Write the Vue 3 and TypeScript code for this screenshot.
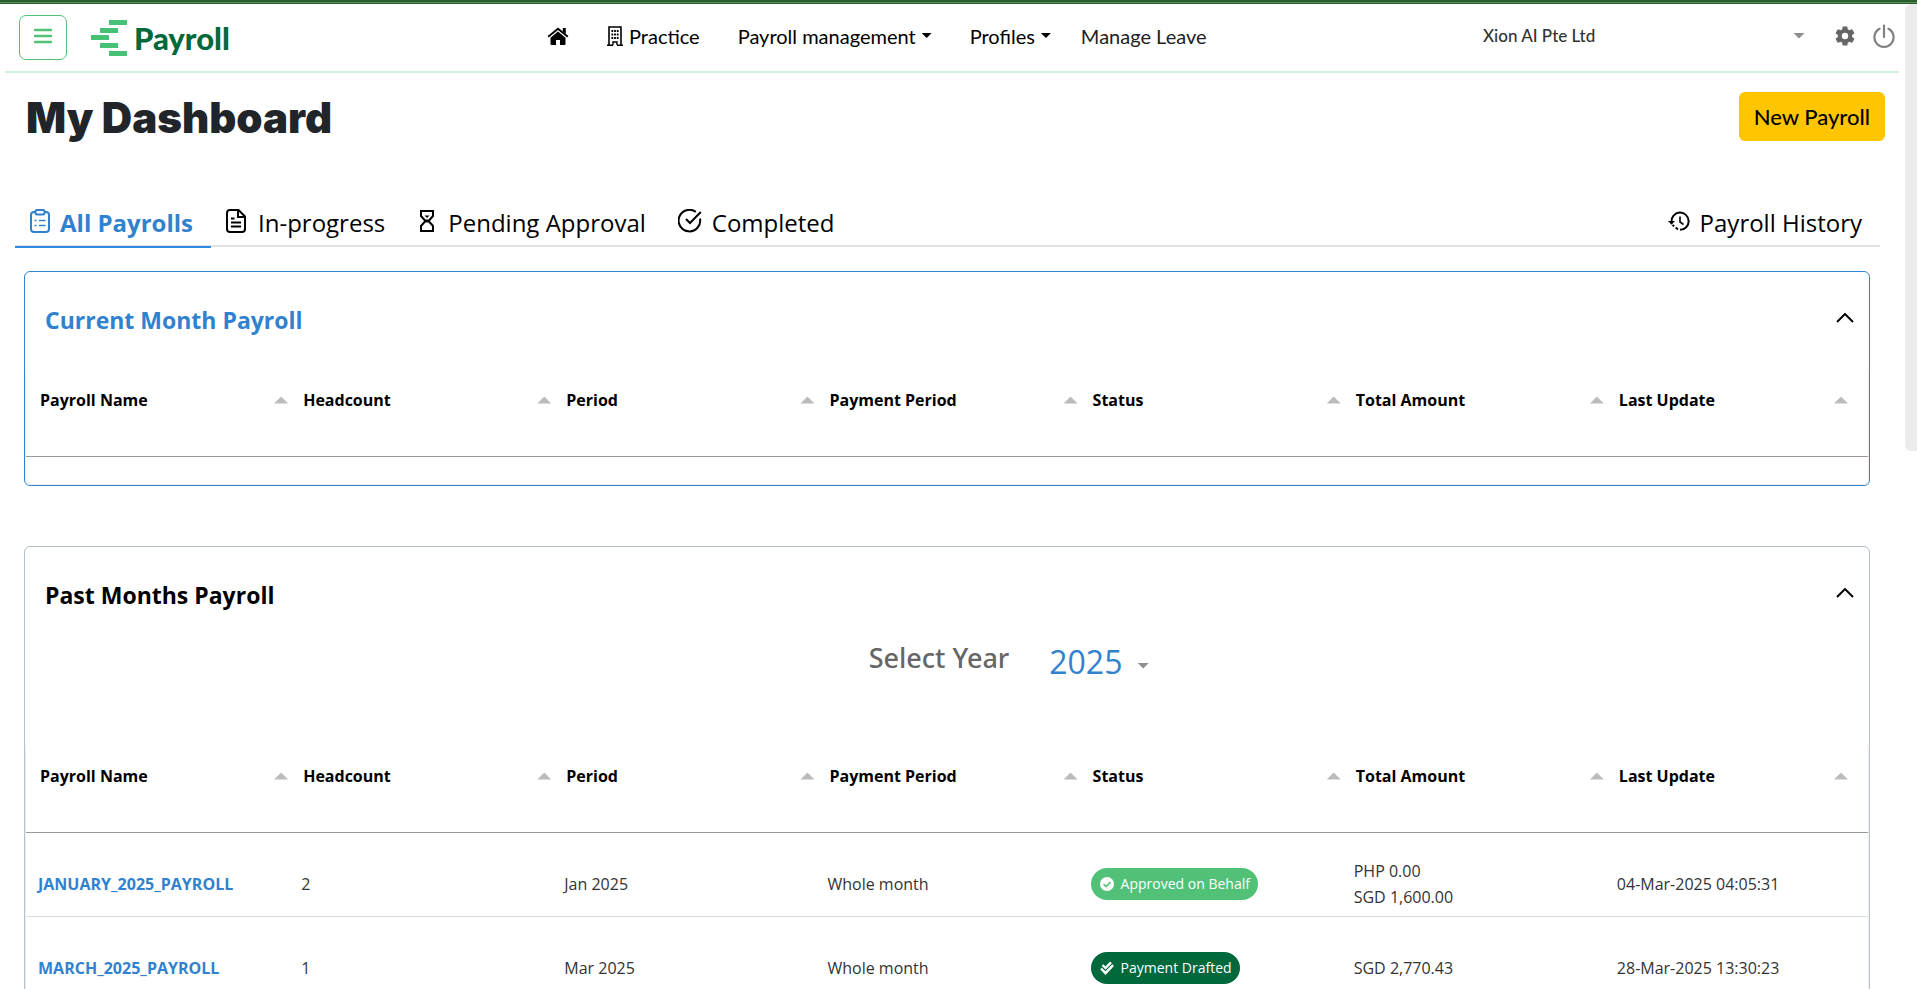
<script setup lang="ts">
import { ref } from 'vue'

interface PayrollRow {
  name: string
  headcount: number
  period: string
  paymentPeriod: string
  status: string
  kind: 'approved' | 'drafted'
  amounts: string[]
  updated: string
}

const columns: string[] = [
  'Payroll Name',
  'Headcount',
  'Period',
  'Payment Period',
  'Status',
  'Total Amount',
  'Last Update',
]

const rows: PayrollRow[] = [
  {
    name: 'JANUARY_2025_PAYROLL',
    headcount: 2,
    period: 'Jan 2025',
    paymentPeriod: 'Whole month',
    status: 'Approved on Behalf',
    kind: 'approved',
    amounts: ['PHP 0.00', 'SGD 1,600.00'],
    updated: '04-Mar-2025 04:05:31',
  },
  {
    name: 'MARCH_2025_PAYROLL',
    headcount: 1,
    period: 'Mar 2025',
    paymentPeriod: 'Whole month',
    status: 'Payment Drafted',
    kind: 'drafted',
    amounts: ['SGD 2,770.43'],
    updated: '28-Mar-2025 13:30:23',
  },
]

const company = ref('Xion AI Pte Ltd')
const year = ref('2025')
const currentOpen = ref(true)
const pastOpen = ref(true)
</script>

<template>
  <div class="page">
    <div class="window-edge"></div>
    <header class="topbar">
      <div class="brand">
        <button class="menu-btn" type="button" aria-label="Menu">
          <svg width="18" height="16" viewBox="0 0 18 16" fill="none" stroke="#51c178" stroke-width="2.400" stroke-linecap="round">
            <path d="M1 2h16M1 8h16M1 14h16" />
          </svg>
        </button>
        <a class="logo" href="#">
          <svg width="36" height="36" viewBox="0 0 36 36" fill="#45c276">
            <path d="M18 0h18v5H18zM9 8h18v5H9zM0 15h18v5H0zM9 23h18v5H9zM18 31h18v5H18z" />
          </svg>
          <span>Payroll</span>
        </a>
      </div>
      <nav class="nav">
        <a class="nav-item home" href="#" aria-label="Home">
          <svg width="22" height="18" viewBox="0 0 22 18" fill="#000">
            <path d="M11 4.500 3.500 10.700V17a1 1 0 0 0 1 1H9v-5h4v5h4.500a1 1 0 0 0 1-1v-6.300z" />
            <path d="M1.200 9.800 11 1.700l9.800 8.100" fill="none" stroke="#000" stroke-width="1.900" />
            <path d="M15.800 1h3v6l-3-2.500z" />
          </svg>
        </a>
        <a class="nav-item practice" href="#">
          <svg width="16" height="20" viewBox="0 0 16 20" fill="none" stroke="#000">
            <path d="M2 19V1h12v18" stroke-width="1.600" />
            <path d="M0 19.200h6M10 19.200h6M6 19v-3h4v3" stroke-width="1.400" />
            <path d="M4.400 5h1.800M7.100 5h1.800M9.800 5h1.800M4.400 8.500h1.800M7.100 8.500h1.800M9.800 8.500h1.800M4.400 12h1.800M7.100 12h1.800M9.800 12h1.800" stroke-width="1.800" />
          </svg>
          <span>Practice</span>
        </a>
        <button class="nav-item" type="button">Payroll management<i class="caret dark"></i></button>
        <button class="nav-item" type="button">Profiles<i class="caret dark"></i></button>
        <a class="nav-item leave" href="#">Manage Leave</a>
      </nav>
      <div class="account">
        <label class="company">
          <select v-model="company" aria-label="Company">
            <option>Xion AI Pte Ltd</option>
          </select>
          <i class="caret"></i>
        </label>
        <button class="icon-btn" type="button" aria-label="Settings">
          <svg width="22" height="22" viewBox="1 1 22 22" fill="#666">
            <path d="M19.140 12.940c.04-.3.06-.61.06-.94 0-.32-.02-.64-.07-.94l2.030-1.580a.49.49 0 0 0 .12-.61l-1.920-3.320a.49.49 0 0 0-.59-.22l-2.390.96c-.5-.38-1.030-.7-1.620-.94l-.36-2.540a.48.48 0 0 0-.48-.41h-3.840a.48.48 0 0 0-.47.41l-.36 2.540c-.59.24-1.130.57-1.620.94l-2.390-.96a.48.48 0 0 0-.59.22L2.740 8.870a.48.48 0 0 0 .12.61l2.030 1.580c-.05.3-.09.63-.09.94s.02.64.07.94l-2.030 1.580a.49.49 0 0 0-.12.61l1.920 3.320c.12.22.37.29.59.22l2.390-.96c.5.38 1.030.7 1.620.94l.36 2.540c.05.24.24.41.48.41h3.840c.24 0 .44-.17.47-.41l.36-2.540c.59-.24 1.130-.56 1.620-.94l2.390.96c.22.08.47 0 .59-.22l1.920-3.320a.48.48 0 0 0-.12-.61zM12 15.200A3.200 3.200 0 1 1 12 8.800a3.200 3.200 0 0 1 0 6.400z" />
          </svg>
        </button>
        <button class="icon-btn" type="button" aria-label="Log out">
          <svg width="22" height="24" viewBox="0 0 22 24" fill="none" stroke="#808080" stroke-width="2.200" stroke-linecap="round">
            <path d="M11 1.500v11.500M6.500 4.800a9.600 9.600 0 1 0 9 0" />
          </svg>
        </button>
      </div>
    </header>

    <main class="content">
      <div class="title-row">
        <h1>My Dashboard</h1>
        <button class="new-btn" type="button">New Payroll</button>
      </div>

      <div class="tabs" role="tablist">
        <button class="tab active" role="tab" type="button">
          <svg width="20" height="24" viewBox="0 0 20 24" fill="none" stroke="#3182ce" stroke-width="2">
            <rect x="1" y="3" width="18" height="20" rx="3" />
            <rect x="5.500" y="1" width="9" height="4.500" rx="1.500" fill="#fff" />
            <path d="M4.500 11.500h2M9 11.500h6.500M4.500 16.500h2M9 16.500h6.500" stroke-width="1.600" />
          </svg>
          <span>All Payrolls</span>
        </button>
        <button class="tab" role="tab" type="button">
          <svg width="20" height="24" viewBox="0 0 20 24" fill="none" stroke="#000" stroke-width="2">
            <path d="M4 1h8.500L19 7.500V20a3 3 0 0 1-3 3H4a3 3 0 0 1-3-3V4a3 3 0 0 1 3-3z" />
            <path d="M12 1v7h7" />
            <path d="M5 9.500h3.500M5 13.500h10M5 17.500h10" stroke-width="1.800" />
          </svg>
          <span>In-progress</span>
        </button>
        <button class="tab pending" role="tab" type="button">
          <svg width="14" height="22" viewBox="0 0 14 22" fill="none" stroke="#000" stroke-width="2">
            <path d="M1 1h12v5l-4.500 5 4.500 5v5H1v-5l4.500-5L1 6z" />
            <path d="M4.500 5.500h5L7 8z" fill="#000" stroke="none" />
            <path d="M5.500 9.500h3v3h-3z" fill="#000" stroke="none" />
          </svg>
          <span>Pending Approval</span>
        </button>
        <button class="tab completed" role="tab" type="button">
          <svg width="24" height="24" viewBox="0 0 24 24" fill="none" stroke="#000" stroke-width="2">
            <path d="M22 9.500A10.800 10.800 0 1 1 17.800 2.900" />
            <path d="M8 10l4 4L22.800 3" />
          </svg>
          <span>Completed</span>
        </button>
        <button class="tab history" role="tab" type="button">
          <svg width="22" height="20" viewBox="0 0 22 20" fill="none" stroke="#000" stroke-width="2">
            <path d="M3.500 11A8.600 8.600 0 1 1 12 18.800" />
            <path d="M10 18.500 4.500 14" stroke-dasharray="3 2" />
            <path d="M0 10h7l-3.500 3.800z" fill="#000" stroke="none" />
            <path d="M12 5.500V11l3.500 2.500" stroke-width="1.600" />
          </svg>
          <span>Payroll History</span>
        </button>
      </div>

      <section class="card current">
        <div class="card-head">
          <h2>Current Month Payroll</h2>
          <button class="toggle" type="button" aria-label="Toggle current month" @click="currentOpen = !currentOpen">
            <svg width="18" height="10" viewBox="0 0 18 10" fill="none" stroke="#000" stroke-width="2"><path d="M1 9l8-8 8 8" /></svg>
          </button>
        </div>
        <div v-if="currentOpen" class="table-box">
          <table>
            <thead>
              <tr>
                <th v-for="c in columns" :key="c" scope="col">
                  <span class="th"><span>{{ c }}</span><i class="sort"></i></span>
                </th>
              </tr>
            </thead>
          </table>
        </div>
      </section>

      <section class="card past">
        <div class="card-head">
          <h2>Past Months Payroll</h2>
          <button class="toggle" type="button" aria-label="Toggle past months" @click="pastOpen = !pastOpen">
            <svg width="18" height="10" viewBox="0 0 18 10" fill="none" stroke="#000" stroke-width="2"><path d="M1 9l8-8 8 8" /></svg>
          </button>
        </div>
        <div class="year-row">
          <label for="year">Select Year</label>
          <div class="year-select">
            <select id="year" v-model="year">
              <option>2025</option>
            </select>
            <i class="caret"></i>
          </div>
        </div>
        <div v-if="pastOpen" class="table-box">
          <table>
            <thead>
              <tr>
                <th v-for="c in columns" :key="c" scope="col">
                  <span class="th"><span>{{ c }}</span><i class="sort"></i></span>
                </th>
              </tr>
            </thead>
            <tbody>
              <tr v-for="r in rows" :key="r.name">
                <td><a class="row-link" href="#">{{ r.name }}</a></td>
                <td>{{ r.headcount }}</td>
                <td>{{ r.period }}</td>
                <td>{{ r.paymentPeriod }}</td>
                <td>
                  <span class="badge" :class="r.kind">
                    <svg v-if="r.kind === 'approved'" width="14" height="14" viewBox="0 0 14 14">
                      <circle cx="7" cy="7" r="7" fill="#fff" />
                      <path d="M3.500 7l2.500 2.500L10.500 5" fill="none" stroke="#51c178" stroke-width="1.600" />
                    </svg>
                    <svg v-else width="14" height="14" viewBox="0 0 14 14" fill="none" stroke="#fff" stroke-width="2.400">
                      <path d="M2.500 4l3 3L11 1.300" />
                      <path d="M1 7.500l4.500 4.700 7.700-8" />
                    </svg>
                    <span>{{ r.status }}</span>
                  </span>
                </td>
                <td><div v-for="a in r.amounts" :key="a">{{ a }}</div></td>
                <td>{{ r.updated }}</td>
              </tr>
            </tbody>
          </table>
        </div>
      </section>
    </main>
    <div class="scroll-thumb"></div>
  </div>
</template>

<style>
html,
body {
  margin: 0;
  overflow: hidden;
  background: #fff;
}
</style>

<style scoped>
.page {
  position: relative;
  height: 100vh;
  overflow: hidden;
  box-sizing: border-box;
  padding-right: 18px;
  font-family: "Open Sans", "Noto Sans", sans-serif;
  color: #333;
}
.page * {
  box-sizing: border-box;
}
button,
select {
  font: inherit;
  color: inherit;
  background: none;
  border: 0;
  padding: 0;
  margin: 0;
  cursor: pointer;
}
select {
  appearance: none;
  outline: none;
}
a {
  color: inherit;
  text-decoration: none;
}
svg {
  flex: none;
  display: block;
}
.window-edge {
  height: 4px;
  margin-right: -18px;
  background: linear-gradient(#285e2b 0 2px, #5d8a60 2px 3px, #285e2b 3px 4px);
}
.scroll-thumb {
  position: absolute;
  top: 4px;
  right: 0;
  width: 12px;
  height: 447px;
  border-radius: 6px 0 0 6px;
  background: #ebebeb;
}

.topbar {
  display: flex;
  align-items: center;
  height: 69px;
  margin-left: 5px;
  border-bottom: 2px solid #d2f0dc;
  font-family: Lato, sans-serif;
}
.brand {
  display: flex;
  align-items: center;
  gap: 24px;
  flex: 0 0 542px;
  padding-left: 14px;
}
.menu-btn {
  display: flex;
  align-items: center;
  justify-content: center;
  width: 48px;
  height: 45px;
  border: 1px solid #51c178;
  border-radius: 7px;
  padding-bottom: 4px;
}
.logo {
  display: flex;
  align-items: center;
  gap: 7px;
  color: #00693c;
  font-size: 31px;
  font-weight: 900;
  line-height: 34px;
}
.nav {
  display: flex;
  align-items: center;
  gap: 38px;
  padding-bottom: 4px;
  color: #000;
  font-size: 20px;
  line-height: 28px;
}
.nav-item {
  display: flex;
  align-items: center;
  gap: 6px;
  white-space: nowrap;
}
.leave {
  margin-left: -8px;
  color: #222;
}
.caret {
  width: 12px;
  height: 6px;
  background: #8f8f8f;
  clip-path: polygon(0 0, 100% 0, 50% 100%);
}
.caret.dark {
  width: 10px;
  height: 5px;
  background: #000;
}
.account {
  display: flex;
  align-items: center;
  gap: 17px;
  margin-left: auto;
  padding: 0 4px 4px 0;
}
.company {
  display: flex;
  align-items: center;
  width: 322px;
  margin-right: 12px;
  font-size: 17px;
  font-weight: 500;
}
.company select {
  flex: 1;
  color: #333;
}
.icon-btn {
  display: flex;
}

.content {
  padding-left: 24px;
}
.title-row {
  display: flex;
  justify-content: space-between;
  align-items: flex-start;
  padding: 19px 14px 0 2px;
}
h1 {
  margin: 0;
  font-family: Inter, sans-serif;
  font-size: 42px;
  font-weight: 900;
  line-height: 52px;
  color: #212529;
}
.new-btn {
  height: 49px;
  padding: 0 15px;
  border-radius: 6px;
  background: #ffc600;
  color: #000;
  font-family: Lato, sans-serif;
  font-size: 22px;
  font-weight: 500;
}

.tabs {
  display: flex;
  height: 47px;
  margin: 56px 19px 0 -9px;
  border-bottom: 2px solid #dee2e6;
  color: #000;
  font-size: 24px;
  line-height: 32px;
}
.tab {
  display: flex;
  align-items: center;
  gap: 12px;
  height: 48px;
  padding: 0 15px 2px;
  white-space: nowrap;
}
.tab svg {
  margin-bottom: 4px;
}
.tab.active {
  gap: 10px;
  width: 196px;
  padding-bottom: 0;
  border-bottom: 2px solid #2e8be0;
  color: #3182ce;
  font-weight: 700;
}
.tab.pending {
  gap: 14px;
  padding-left: 20px;
}
.tab.completed {
  gap: 10px;
  padding-left: 17px;
}
.tab.history {
  gap: 10px;
  margin-left: auto;
  padding-right: 18px;
}

.card {
  margin: 24px 29px 0 0;
  border: 1px solid #3182ce;
  border-radius: 6px;
}
.card.past {
  margin-top: 60px;
  border-color: #b3bfcc;
}
.card-head {
  display: flex;
  align-items: center;
  justify-content: space-between;
  height: 94px;
  padding: 2px 15px 0 20px;
}
h2 {
  margin: 0;
  font-size: 23px;
  font-weight: 700;
  line-height: 32px;
  color: #3182ce;
}
.past h2 {
  color: #000;
}
.toggle {
  display: flex;
  padding-bottom: 4px;
}
.year-row {
  display: flex;
  align-items: center;
  justify-content: center;
  gap: 40px;
  height: 33px;
  margin-bottom: 68px;
  padding-left: 124px;
}
.year-row label {
  font-family: "Noto Sans", sans-serif;
  font-size: 27px;
  font-weight: 500;
  color: #666;
}
.year-select {
  display: flex;
  align-items: center;
  gap: 14px;
  padding-top: 8px;
}
.year-select select {
  font-size: 32px;
  line-height: 36px;
  color: #3182ce;
}
.year-select .caret {
  margin-top: 8px;
}

.table-box {
  border: 1px solid #eef0f2;
  border-top-color: transparent;
  border-radius: 6px;
}
.current .table-box {
  padding-bottom: 27px;
}
table {
  width: 100%;
  table-layout: fixed;
  border-collapse: separate;
  border-spacing: 0;
  font-size: 16px;
  line-height: 26px;
}
th {
  height: 90px;
  padding: 20px 0 0 14px;
  border-bottom: 1px solid #999;
  vertical-align: top;
  text-align: left;
  font-weight: 700;
  color: #000;
}
.th {
  display: flex;
  align-items: center;
  justify-content: space-between;
  padding-right: 1px;
}
th:last-child .th {
  padding-right: 20px;
}
.sort {
  width: 14px;
  height: 7px;
  background: #bbb;
  clip-path: polygon(50% 0, 100% 100%, 0 100%);
}
td {
  height: 84px;
  padding: 18px 0 0 12px;
  border-bottom: 1px solid #ddd;
}
.row-link {
  color: #3182ce;
  font-weight: 700;
}
.badge {
  display: inline-flex;
  align-items: center;
  gap: 7px;
  height: 32px;
  padding: 0 8px 0 9px;
  border-radius: 16px;
  background: #51c178;
  color: #fff;
  font-size: 14px;
}
.badge.drafted {
  background: #00693c;
}
</style>
